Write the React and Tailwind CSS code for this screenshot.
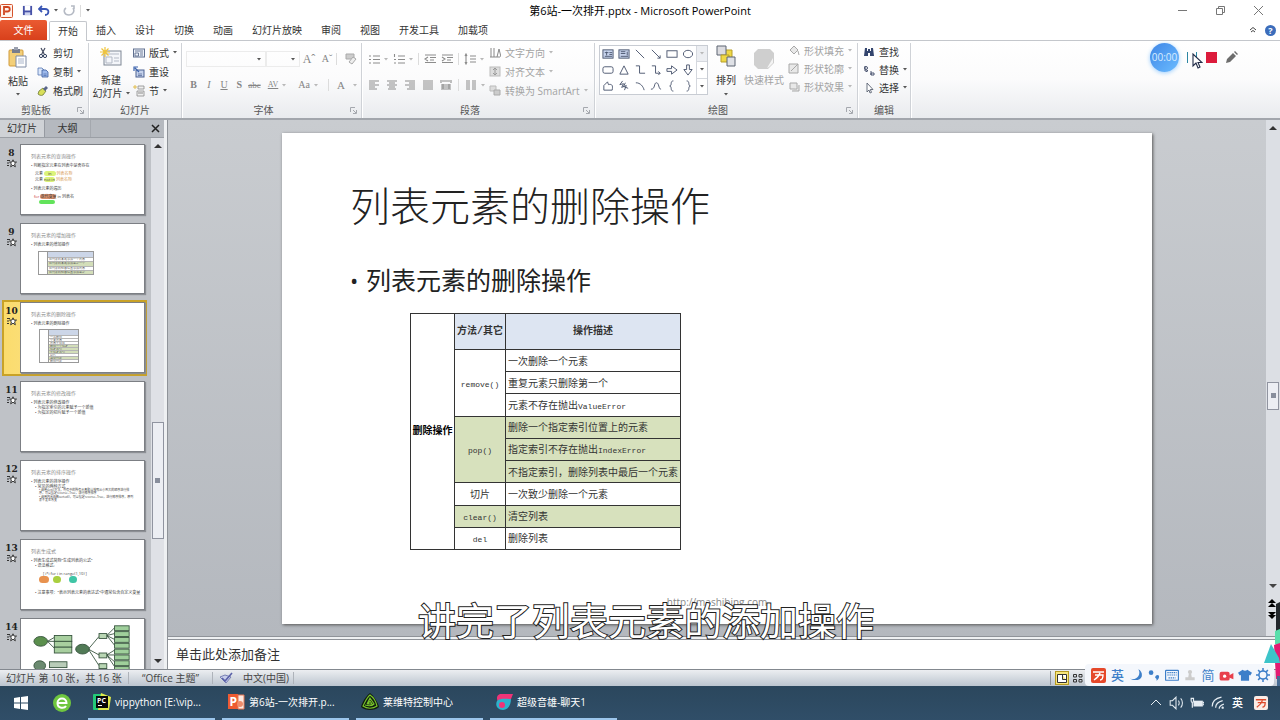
import React from "react";

const ribbonTabs = ["插入", "设计", "切换", "动画", "幻灯片放映", "审阅", "视图", "开发工具", "加载项"];

function Caret({ dim }) {
  return (
    <svg viewBox="0 0 4 3" className={dim ? "h-[3px] w-1 shrink-0 fill-[#b8b8b8]" : "h-[3px] w-1 shrink-0 fill-[#555]"}>
      <path d="M0 0h4L2 2.6z" />
    </svg>
  );
}

function Icon({ children, className = "h-3 w-3" }) {
  return (
    <svg viewBox="0 0 12 12" fill="none" aria-hidden="true" className={className + " shrink-0"}>
      {children}
    </svg>
  );
}

const ScissorsIcon = () => (
  <Icon><path d="M4 1l3.2 6M8 1L4.8 7" stroke="#444b60" strokeWidth="1.2" /><circle cx="4" cy="9" r="1.6" stroke="#33415f" /><circle cx="8" cy="9" r="1.6" stroke="#33415f" /></Icon>
);
const CopyIcon = () => (
  <Icon><path d="M1 2h4l2 2v5H1z" fill="#dbe7fb" stroke="#5878b4" strokeWidth=".8" /><path d="M5 4h4l2 2v5H5z" fill="#9db9ec" stroke="#3c5da0" strokeWidth=".8" /><path d="M6.500 8h3M6.500 9.500h3" stroke="#3c5da0" strokeWidth=".6" /></Icon>
);
const BrushIcon = () => (
  <Icon><path d="M2 6l4-3 3 3-3 4c-2 1-4 0-5-1z" fill="#d9df5a" stroke="#6d7a35" strokeWidth=".8" /><path d="M6 4l3-3 2 2-3 3z" fill="#59658a" /></Icon>
);
const LayoutIcon = () => (
  <Icon><rect x=".5" y="2" width="11" height="8" fill="#eef2fa" stroke="#60708f" /><path d="M2 4h8M2 6h3.500v3H2zM7 6h3M7 8h3" stroke="#60708f" strokeWidth=".9" /></Icon>
);
const ResetIcon = () => (
  <Icon><rect x="3" y="4" width="8" height="7" fill="#c5d2ec" stroke="#4c6292" /><path d="M1 5V1h4M2 2l4 4" stroke="#3a62ad" strokeWidth="1.2" /><path d="M5 8h4M5 9.500h4" stroke="#4c6292" strokeWidth=".7" /></Icon>
);
const SectionIcon = () => (
  <Icon><path d="M0 2h4M2 0v4" stroke="#e2bd4c" strokeWidth="1" /><path d="M5 1h6v3H5zM4 6h7v5H4z" fill="#efefef" stroke="#8b8b8b" strokeWidth=".8" /><path d="M5 8h5" stroke="#8b8b8b" /></Icon>
);

function Group({ label, width, launcher, children }) {
  return (
    <section className={width + " flex shrink-0 flex-col border-r border-[#cfd2d7] shadow-[1px_0_0_#fff]"} aria-label={label}>
      <div className="h-[61px]">{children}</div>
      <div className={(launcher ? "pr-4 " : "") + "relative h-4 text-center text-[10px] leading-4 text-[#555]"}>
        {label}
        {launcher && (
          <button aria-label={label + "选项"} className="absolute top-[5px] right-1">
            <svg viewBox="0 0 7 7" className="h-[7px] w-[7px]" fill="none" stroke="#a5a8ae"><path d="M.5 5V.5H5M3 3l3 3M6.500 3v3.500H3" /></svg>
          </button>
        )}
      </div>
    </section>
  );
}

function SmallCmd({ icon, label, caret, dim }) {
  return (
    <button className={(dim ? "text-[#a3a3a3] " : "text-[#333] ") + "flex h-[19px] items-center gap-1 whitespace-nowrap leading-none"}>
      {icon}
      <span>{label}</span>
      {caret && <Caret dim={dim} />}
    </button>
  );
}

const glyph = "flex h-4 w-[18px] items-center justify-center font-['Liberation_Serif'] leading-none text-[#858585]";
const Sep = () => <span className="h-3 w-px bg-[#dcdcdc]" />;

function LinesIcon({ kind, caret }) {
  const paths = {
    bullets: "M1 3h2M1 6.500h2M1 10h2M5 3h7M5 6.500h7M5 10h7",
    numbers: "M1.500 1v3M1 6.500h2M1 10h2M5 3h7M5 6.500h7M5 10h7",
    outdent: "M1 2h11M6 4.500h6M6 7h4M1 9.500h11M4 4L1 6l3 2",
    indent: "M1 2h11M6 4.500h6M6 7h4M1 9.500h11M1 4l3 2-3 2",
    spacing: "M2 2v8M1 3l1-2 1 2M1 9l1 2 1-2M6 3h6M6 6h6M6 9h6",
    left: "M1 2h10M1 4h6M1 6h10M1 8h6M1 10h8",
    center: "M1 2h10M3 4h6M1 6h10M3 8h6M2 10h8",
    right: "M1 2h10M5 4h6M1 6h10M5 8h6M3 10h8",
    justify: "M1 2h10M1 4h10M1 6h10M1 8h10M1 10h10",
    spread: "M1 1v3M11 1v3M2 2h8M1 6h10M1 8h10M1 10h10M3 5v5M9 5v5",
    columns: "M1 2h4M1 4h4M1 6h4M1 8h4M1 10h4M7 2h4M7 4h4M7 6h4M7 8h4M7 10h4",
  };
  return (
    <button aria-label={kind} className="flex h-4 items-center gap-1">
      <svg viewBox="0 0 12 12" className="h-3 w-3" stroke="#8c8c8c" strokeWidth="1.100" fill="none"><path d={paths[kind]} /></svg>
      {caret && <Caret dim />}
    </button>
  );
}

const shapeList = [
  <g key="a"><rect x="1" y="2" width="11" height="9" fill="#c9d5ee" /><path d="M3 5h4M5 4v4M8 5h3M8 7h3M3 9h8" /></g>,
  <g key="b"><rect x="1" y="2" width="11" height="9" fill="#c9d5ee" /><path d="M3 4h5M3 6h5M10 4v4M3 9h8" /></g>,
  <path key="c" d="M2 2l9 9" />,
  <path key="d" d="M2 2l9 9M11 8v3H8" />,
  <rect key="e" x="1" y="3" width="11" height="7" />,
  <ellipse key="f" cx="6.500" cy="6.500" rx="5" ry="4" />,
  <rect key="g" x="1" y="3" width="11" height="7" rx="2" />,
  <path key="h" d="M6.500 2L11 11H2z" />,
  <path key="i" d="M2 2h4v8h6" />,
  <path key="j" d="M2 2h4v8h5M9 8l2 2-2 2" />,
  <path key="k" d="M1 5h5V2l6 4.500L6 11V8H1z" />,
  <path key="l" d="M5 1h3v5h3l-4.500 6L2 6h3z" />,
  <path key="m" d="M2 11V6l4-4 1 3c4-1 5 1 4 6z" />,
  <path key="n" d="M5 1L2 5l4-1-2 4 5-2-2 5M8 3l-2 4 5 2" />,
  <path key="o" d="M2 3c5 0 8 4 9 8" />,
  <path key="p" d="M1 10c5 0 3-7 6-7s2 7 5 7" />,
  <path key="q" d="M8 1C4 1 7 6 4 6.500 7 7 4 12 8 12" />,
  <path key="r" d="M5 1c4 0 1 5 4 5.500C6 7 9 12 5 12" />,
];

function Ribbon() {
  return (
    <div className="relative flex h-[79px] shrink-0 overflow-hidden border-b-2 border-[#a2a6ac] bg-linear-to-b from-white via-[#fbfbfc] to-[#e9ebee] pt-[2px] text-[10px]">
      <Group label="剪贴板" width="w-[89px]" launcher>
        <div className="flex gap-[7px] pl-[6px]">
          <button className="flex w-6 flex-col items-center pt-1 whitespace-nowrap text-[#333]">
            <svg viewBox="0 0 20 22" className="h-[22px] w-5">
              <rect x="1" y="3" width="14" height="16" rx="1" fill="#f3cf79" stroke="#d19b3c" />
              <path d="M4 2h8v4H4z" fill="#777d8d" /><rect x="6" y="0" width="4" height="3" fill="#9aa0ae" />
              <path d="M8 9h10v11H8z" fill="#fff" stroke="#7f8ba5" /><path d="M10 12h6M10 14h6M10 16h6" stroke="#aab5ca" />
            </svg>
            <span className="mt-1 mb-1 leading-4">粘贴</span>
            <Caret />
          </button>
          <div className="flex flex-col">
            <SmallCmd icon={<ScissorsIcon />} label="剪切" />
            <SmallCmd icon={<CopyIcon />} label="复制" caret />
            <SmallCmd icon={<BrushIcon />} label="格式刷" />
          </div>
        </div>
      </Group>
      <Group label="幻灯片" width="w-[93px]">
        <div className="flex gap-1 pl-1">
          <button className="flex w-9 flex-col items-center pt-1 whitespace-nowrap text-[#333]">
            <svg viewBox="0 0 22 22" className="h-[22px] w-[22px]">
              <rect x="4" y="4" width="17" height="14" fill="#f4f6fa" stroke="#7f8795" /><path d="M6 7h13M6 10h6v6H6zM14 11h5M14 14h5" stroke="#b3b9c5" fill="none" />
              <path d="M5 0v10M0 5h10M1.500 1.500l7 7M8.500 1.500l-7 7" stroke="#f0c43a" strokeWidth="1.200" />
            </svg>
            <span className="mt-1 leading-[14px]">新建</span>
            <span className="flex items-center gap-[3px] leading-[12px]">幻灯片<Caret /></span>
          </button>
          <div className="flex flex-col">
            <SmallCmd icon={<LayoutIcon />} label="版式" caret />
            <SmallCmd icon={<ResetIcon />} label="重设" />
            <SmallCmd icon={<SectionIcon />} label="节" caret />
          </div>
        </div>
      </Group>
      <Group label="字体" width="w-[180px]" launcher>
        <div className="flex flex-col gap-[10px] px-1 pt-2">
          <div className="flex items-center">
            <button aria-label="字体" className="flex h-4 w-20 items-center justify-end border border-[#ececec] px-1"><Caret /></button>
            <button aria-label="字号" className="flex h-4 w-[34px] items-center justify-end border border-[#ececec] px-1"><Caret /></button>
            <span className={glyph + " text-[12px]"}>Aˆ</span>
            <span className={glyph + " text-[10px]"}>Aˇ</span>
            <Sep />
            <span className="pl-2"><Icon className="h-3 w-3"><path d="M1 1h8v5H1z" fill="#ccc" stroke="#aaa" /><path d="M4 9l4-5 3 2-4 5z" fill="#eee" stroke="#aaa" /></Icon></span>
          </div>
          <div className="flex items-center">
            <span className={glyph + " text-[10px] font-bold"}>B</span>
            <span className={glyph + " text-[10px] italic"}>I</span>
            <span className={glyph + " text-[10px] underline"}>U</span>
            <span className={glyph + " text-[10px] font-bold"}>S</span>
            <span className={glyph + " text-[9px] line-through"}>abc</span>
            <span className={glyph + " gap-1 pl-3 text-[8px] underline"}>AV<Caret dim /></span>
            <span className={glyph + " gap-1 pl-7 text-[10px]"}>Aa<Caret dim /></span>
            <span className="flex items-center gap-2 pl-5"><Sep /><span className="flex items-center gap-2 font-['Liberation_Serif'] text-[11px] leading-none text-[#858585]">A<Caret dim /></span></span>
          </div>
        </div>
      </Group>
      <Group label="段落" width="w-[233px]" launcher>
        <div className="flex">
          <div className="flex w-[127px] flex-col gap-[10px] pt-2 pl-[6px]">
            <div className="flex items-center gap-[5px]">
              <LinesIcon kind="bullets" caret /><LinesIcon kind="numbers" caret /><Sep />
              <LinesIcon kind="outdent" /><LinesIcon kind="indent" /><Sep /><LinesIcon kind="spacing" caret />
            </div>
            <div className="flex items-center gap-[6px]">
              <LinesIcon kind="left" /><LinesIcon kind="center" /><LinesIcon kind="right" /><LinesIcon kind="justify" /><LinesIcon kind="spread" /><Sep /><LinesIcon kind="columns" caret />
            </div>
          </div>
          <div className="flex flex-col">
            <SmallCmd dim caret label="文字方向" icon={<Icon><path d="M2 1v9M5 1v9M8 10l2-8 2 8M1 10h10" stroke="#888" /></Icon>} />
            <SmallCmd dim caret label="对齐文本" icon={<Icon><rect x="1" y="1" width="10" height="9" fill="#ddd" stroke="#bbb" /><path d="M6 2v7M4 4l2-2 2 2M4 7l2 2 2-2" stroke="#999" /></Icon>} />
            <SmallCmd dim caret label="转换为 SmartArt" icon={<Icon><path d="M1 1h6v5H1z" fill="#ddd" stroke="#bbb" /><path d="M5 5h6v5H5z" fill="#ccc" stroke="#aaa" /></Icon>} />
          </div>
        </div>
      </Group>
      <Group label="绘图" width="w-[263px]" launcher>
        <div className="flex gap-1 pt-[2px] pl-1">
          <div className="flex h-[50px] w-[109px] border border-[#c8ccd3] bg-white">
            <div className="grid flex-1 grid-cols-6 grid-rows-3 place-items-center">
              {shapeList.map((s, i) => (
                <svg key={i} viewBox="0 0 13 13" className="h-3 w-3" fill="none" stroke="#4a556e">{s}</svg>
              ))}
            </div>
            <div className="flex w-[11px] flex-col border-l border-[#d5d8de]">
              <button aria-label="上一行" className="flex flex-1 items-center justify-center bg-[#eceef2]"><Caret dim /></button>
              <button aria-label="下一行" className="flex flex-1 items-center justify-center border-y border-[#d5d8de]"><Caret /></button>
              <button aria-label="其他形状" className="flex flex-1 items-center justify-center"><Caret /></button>
            </div>
          </div>
          <button className="flex w-7 flex-col items-center whitespace-nowrap text-[#333]">
            <svg viewBox="0 0 20 22" className="h-[22px] w-5">
              <path d="M7 5h9v9H7z" fill="#efd847" stroke="#b79f29" /><path d="M1 1h9v9H1z" fill="#dcdce0" stroke="#5d6473" /><path d="M5 10h8v7H5z" fill="#efd847" stroke="#b79f29" /><path d="M11 12h8v9h-8z" fill="#dfe1e6" stroke="#5d6473" />
            </svg>
            <span className="mt-[5px] mb-[5px] leading-4">排列</span>
            <Caret />
          </button>
          <button className="flex w-10 flex-col items-center pt-1 whitespace-nowrap text-[#a3a3a3]">
            <svg viewBox="0 0 20 20" className="h-5 w-5"><path d="M4 0h12l4 4v10l-6 6H4l-4-4V4z" fill="#cfcfcf" /><path d="M19 9l-6 10 2-1 4-4z" fill="#f3f3f3" /></svg>
            <span className="mt-[3px] leading-4">快速样式</span>
          </button>
          <div className="-mt-1 flex flex-col">
            {[["形状填充", "M2 5l4-4 4 4-4 4zM10 6l1 4"], ["形状轮廓", "M1 1h9v9H1zM3 8l7-7"], ["形状效果", "M2 2h7v6H2zM4 10h7V4"]].map(([t, d]) => (
              <div key={t} className="h-[18px]"><SmallCmd dim caret label={t} icon={<Icon><path d={d} stroke="#a8a8a8" fill="#e8e8e8" /></Icon>} /></div>
            ))}
          </div>
        </div>
      </Group>
      <Group label="编辑" width="w-[53px]">
        <div className="-mt-px flex flex-col pl-[5px]">
          <div className="h-[18px]"><SmallCmd label="查找" icon={<Icon><path d="M2 2h2v3h1V3h2v2h1V2h2l1 8H7V7H5v3H1z" fill="#34456e" /></Icon>} /></div>
          <div className="h-[18px]"><SmallCmd caret label="替换" icon={<Icon><path d="M2 2v5h3M3 8l2-2M8 7v4M8 9h3v2H8z" stroke="#4a5470" /><circle cx="3" cy="4" r="1.500" stroke="#4a5470" /></Icon>} /></div>
          <div className="h-[18px]"><SmallCmd caret label="选择" icon={<Icon><path d="M4 1v9l2-2 1 3 1.500-.6L7.300 7.500H10z" fill="#fff" stroke="#5a6272" strokeWidth=".9" /></Icon>} /></div>
        </div>
      </Group>

      <div className="absolute top-[2px] right-[42px] flex items-center">
        <div className="flex h-[29px] w-[29px] items-center justify-center rounded-full bg-linear-to-br from-[#3f86e6] to-[#6cbcff] text-[10px] text-[#d9ecff] shadow-[0_1px_4px_#9ed0ff]">00:00</div>
        <button aria-label="暂停" className="relative mr-[9px] ml-2 flex h-4 w-[10px] items-center justify-between">
          <span className="h-[11px] w-px bg-[#2b86a3]" /><span className="h-[11px] w-px bg-[#2b86a3]" />
          <svg viewBox="0 0 11 16" className="absolute top-[3px] left-[5px] h-4 w-[11px]"><path d="M1 1v12l3-3 2 5 2-1-2-4.500h4z" fill="#fff" stroke="#222c48" strokeWidth="1.100" /></svg>
        </button>
        <button aria-label="停止" className="h-[11px] w-[11px] bg-[#dc1b3c]" />
        <button aria-label="画笔" className="ml-2">
          <svg viewBox="0 0 13 13" className="h-[13px] w-[13px]"><path d="M1 12l1-4 6-6 3 3-6 6zM9 1l1-1 3 3-1 1z" fill="#6d6d6d" /></svg>
        </button>
      </div>
    </div>
  );
}

const thumbTitle = "text-[5px] leading-[8px] text-[#8a8a8a]";
const thumbText = "text-[4px] leading-[5px] text-[#444] whitespace-nowrap";

function MiniTable({ rows, green, className }) {
  return (
    <div className={className + " flex border border-[#999] text-[3px] leading-none text-[#555]"}>
      <div className="flex w-[9px] items-center justify-center border-r border-[#999] bg-white" />
      <div className="flex flex-1 flex-col">
        <div className="h-[5px] bg-[#ccd6e8]" />
        {rows.map((r, i) => (
          <div key={i} className={(green.includes(i) ? "bg-[#d3deb9] " : "bg-white ") + "flex flex-1 items-center overflow-hidden border-t border-[#b5b5b5] pl-px whitespace-nowrap"}>{r}</div>
        ))}
      </div>
    </div>
  );
}

const thumbs = [
  { n: 8, title: "列表元素的查询操作", body: (
    <>
      <p className={thumbText}>• 判断指定元素在列表中是否存在</p>
      <p className={thumbText + " mt-[3px] pl-1"}>元素 <span className="rounded-full bg-[#dcf37b] px-1">in</span> <span className="text-[#d79a52]">列表名称</span></p>
      <p className={thumbText + " mt-px pl-1"}>元素 <span className="rounded-full bg-[#dcf37b]">not in</span> <span className="text-[#d79a52]">列表名称</span></p>
      <p className={thumbText + " mt-1"}>• 列表元素的遍历</p>
      <p className={thumbText + " mt-[3px] pl-[3px]"}><span className="text-[#c33]">for</span> <span className="rounded-full bg-[#d9906b]">迭代变量</span> in 列表名</p>
      <div className="mt-px ml-2 h-1 w-4 rounded-full bg-[#62e35b]" />
    </>
  ) },
  { n: 9, title: "列表元素的增加操作", body: (
    <><p className={thumbText}>• 列表元素的增加操作</p>
      <MiniTable className="mt-1 ml-[7px] h-6 w-14" green={[1, 3]} rows={["在列表的末尾添加一个元素", "在列表的末尾添加至少一个", "在列表的任意位置添加元素", "在列表的任意位置添加至少"]} /></>
  ) },
  { n: 10, title: "列表元素的删除操作", body: (
    <><p className={thumbText}>• 列表元素的删除操作</p>
      <MiniTable className="mt-[3px] ml-2 h-[34px] w-[40px]" green={[3, 4, 5, 7]} rows={["一次删除", "重复元素", "元素不存在", "删除一个指定", "指定索引", "不指定索引", "切片", "清空列表", "删除列表"]} /></>
  ) },
  { n: 11, title: "列表元素的修改操作", body: (
    <><p className={thumbText}>• 列表元素的修改操作</p><p className={thumbText + " pl-1"}>• 为指定索引的元素赋予一个新值</p><p className={thumbText + " pl-1"}>• 为指定的切片赋予一个新值</p></>
  ) },
  { n: 12, title: "列表元素的排序操作", body: (
    <><p className={thumbText}>• 列表元素的排序操作</p><p className={thumbText + " pl-1"}>• 常见的两种方式</p>
      <p className="pl-2 text-[3px] leading-[3px] text-[#444]">• 调用sort()方法，列有中的所有元素默认按照从小到大的顺序进行排序，可以指定reverse=True，进行降序排序</p>
      <p className="mt-px pl-2 text-[3px] leading-[3px] text-[#444]">• 调用内置函数sorted()，可以指定reverse=True，进行降序排序，原列表不发生改变</p></>
  ) },
  { n: 13, title: "列表生成式", body: (
    <><p className={thumbText}>• 列表生成式简称“生成列表的公式”</p><p className={thumbText + " pl-1"}>• 语法格式:</p>
      <p className={thumbText + " mt-[3px] pl-3"}>[ i*i for i in range(1,10) ]</p>
      <div className="flex gap-1 pl-2"><span className="h-[7px] w-[10px] rounded-full bg-[#e8924f]" /><span className="h-[7px] w-2 rounded-full bg-[#a9cf3f]" /><span className="ml-1 h-[7px] w-2 rounded-full bg-[#3fc5a5]" /></div>
      <p className={thumbText + " mt-[7px] pl-1"}>• 注意事项：“表示列表元素的表达式”中通常包含自定义变量</p></>
  ) },
];

function TreeThumb() {
  const leaves = [7, 13, 19, 25, 31, 37, 43, 49];
  return (
    <svg viewBox="0 0 124 71" className="h-full w-full" stroke="#35523c" strokeWidth=".9" fill="none">
      <path d="M26 23l7-4M26 23h7M26 23l7 7M68 31l11-13M68 31l11 6M68 31l11 17M87 17l8-8M87 17l8-2M87 17l8 4M87 17l8 10M87 37l8-5M87 37h8M87 37l8 7M87 37l8 12" />
      <ellipse cx="19" cy="23" rx="7" ry="5" fill="#5b8f4d" /><ellipse cx="62" cy="31" rx="7" ry="5" fill="#517a56" /><ellipse cx="18" cy="48" rx="6" ry="5" fill="#6b8a70" />
      {[18, 24, 30].map((y) => <rect key={y} x="33" y={y - 1} width="18" height="6" fill="#a8cf9f" />)}
      <rect x="28" y="44" width="18" height="6" fill="#b9ccb8" />
      {[15, 35, 46].map((y) => <rect key={y} x="79" y={y} width="8" height="5" fill="#b9d6b4" />)}
      {leaves.map((y) => <rect key={y} x="95" y={y} width="15" height="5" fill="#9fcf9b" />)}
    </svg>
  );
}

function Thumb({ n, active, children }) {
  return (
    <li className={(active ? "border-[#c9a227] bg-linear-to-r from-[#fbdc6d] to-[#f9e9a8] " : "border-transparent ") + "mr-1 mb-[3px] ml-[2px] flex shrink-0 border-2 pb-px"}>
      <div className="flex w-[15px] shrink-0 flex-col items-center pt-[3px] font-['DejaVu_Serif',serif] text-[9px] leading-[12px] font-bold text-[#222]">
        <span>{n}</span>
        <svg viewBox="0 0 10 9" className="h-[9px] w-[10px]" fill="#fff" stroke="#222" strokeWidth=".9"><path d="M0 1.500h3M0 4h2M0 6.500h2" /><path d="M6 .8l1 2.300h2.500L7.600 4.800l.7 3L6 6.200 3.700 7.800l.7-3-1.900-1.700H5z" /></svg>
      </div>
      <div className="ml-px h-[71px] w-[125px] shrink-0 overflow-hidden border border-[#7c7f84] bg-white shadow-[1px_1px_1px_#8c8f94]">{children}</div>
    </li>
  );
}

function SidePanel() {
  return (
    <aside className="flex w-[164px] shrink-0 flex-col bg-[#bfc2c7]">
      <div className="flex h-[18px] shrink-0 items-stretch border-b border-[#9b9fa5] bg-[#b5b9bf] text-[10px] text-[#333]">
        <button className="w-[45px] border-r border-[#969aa1] bg-[#cfd2d6]">幻灯片</button>
        <button className="w-[46px] border-r border-[#a4a8ae]">大纲</button>
        <button aria-label="关闭" className="ml-auto pr-1"><svg viewBox="0 0 9 9" className="h-[9px] w-[9px]" stroke="#222" strokeWidth="1.500"><path d="M1 1l7 7M8 1L1 8" /></svg></button>
      </div>
      <div className="flex min-h-0 flex-1">
        <ol className="flex min-w-0 flex-1 flex-col overflow-hidden pt-1">
          {thumbs.map((t) => (
            <Thumb key={t.n} n={t.n} active={t.n === 10}>
              <div className="px-[10px] pt-[7px]"><h3 className={thumbTitle}>{t.title}</h3><div className="pt-[3px]">{t.body}</div></div>
            </Thumb>
          ))}
          <Thumb n={14}><TreeThumb /></Thumb>
        </ol>
        <div className="flex w-[13px] flex-col items-center bg-[#dfe1e6]">
          <button aria-label="向上滚动" className="flex h-4 items-center"><svg viewBox="0 0 8 4" className="h-1 w-2 fill-[#333]"><path d="M0 4h8L4 0z" /></svg></button>
          <div className="flex-[269]" />
          <div className="flex w-3 flex-[115] items-center justify-center border border-[#9094a0] bg-[#eceef3]"><span className="h-[5px] w-[5px] bg-[#888e9c]" /></div>
          <div className="flex-[114]" />
          <button aria-label="向下滚动" className="flex h-4 items-center"><svg viewBox="0 0 8 4" className="h-1 w-2 fill-[#333]"><path d="M0 0h8L4 4z" /></svg></button>
        </div>
      </div>
    </aside>
  );
}

const cell = "border border-[#333] px-[2px] pt-1 pb-0 whitespace-nowrap leading-none";
const M = ({ children }) => <span className="font-['Liberation_Mono',monospace] text-[8px]">{children}</span>;

function MethodTable() {
  return (
    <table className="h-[237px] w-[270px] table-fixed border-collapse font-['Liberation_Mono','Noto_Sans_CJK_SC',monospace] text-[10px] text-[#333]">
      <colgroup><col className="w-[44px]" /><col className="w-[51px]" /><col className="w-[175px]" /></colgroup>
      <tbody>
        <tr className="h-9"><th rowSpan={10} className="border border-[#333] p-0 whitespace-nowrap text-black">删除操作</th><th className="border border-[#333] bg-[#dde5f2] p-0 whitespace-nowrap">方法/其它</th><th className="border border-[#333] bg-[#dde5f2] p-0">操作描述</th></tr>
        <tr><td rowSpan={3} className={cell + " text-center"}><M>remove()</M></td><td className={cell}>一次删除一个元素</td></tr>
        <tr><td className={cell}>重复元素只删除第一个</td></tr>
        <tr><td className={cell}>元素不存在抛出<M>ValueError</M></td></tr>
        <tr className="bg-[#d7e1bd]"><td rowSpan={3} className={cell + " text-center"}><M>pop()</M></td><td className={cell}>删除一个指定索引位置上的元素</td></tr>
        <tr className="bg-[#d7e1bd]"><td className={cell}>指定索引不存在抛出<M>IndexError</M></td></tr>
        <tr className="bg-[#d7e1bd]"><td className={cell}>不指定索引，删除列表中最后一个元素</td></tr>
        <tr><td className={cell + " text-center"}>切片</td><td className={cell}>一次致少删除一个元素</td></tr>
        <tr className="bg-[#d7e1bd]"><td className={cell + " text-center"}><M>clear()</M></td><td className={cell}>清空列表</td></tr>
        <tr><td className={cell + " text-center"}><M>del</M></td><td className={cell}>删除列表</td></tr>
      </tbody>
    </table>
  );
}

function Editor() {
  return (
    <main className="flex min-w-0 flex-1 flex-col border-l border-[#8f9399]">
      <div className="flex min-h-0 flex-1 border-b border-[#8f9399]">
        <div className="flex min-w-0 flex-1 justify-center bg-linear-to-b from-[#c9ccd0] to-[#b4b8be] pt-[13px] pb-3">
          <article className="flex aspect-[870/491] h-full flex-col bg-white px-[68px] pt-[46px] text-[#222] shadow-[1px_1px_3px_#555]">
            <h1 className="text-[40px] leading-[54px] font-light">列表元素的删除操作</h1>
            <p className="mt-[29px] flex items-center text-[25px] leading-9"><span className="w-4 text-[22px]">•</span>列表元素的删除操作</p>
            <div className="mt-[15px] pl-[60px]"><MethodTable /></div>
            <p className="mt-auto pb-[14px] text-center text-[10px] leading-4 text-[#888]">http://mashibing.com</p>
          </article>
        </div>
        <div className="flex w-[14px] flex-col items-center bg-[#dcdfe4]">
          <button aria-label="上一屏" className="flex h-4 items-center"><svg viewBox="0 0 8 4" className="h-1 w-2 fill-[#333]"><path d="M0 4h8L4 0z" /></svg></button>
          <div className="flex-[248]" />
          <div className="flex w-3 flex-[26] items-center justify-center border border-[#9094a0] bg-[#eceef3]"><span className="h-[5px] w-[5px] bg-[#888e9c]" /></div>
          <div className="flex-[170]" />
          <button aria-label="下一屏" className="flex h-4 items-center"><svg viewBox="0 0 8 4" className="h-1 w-2 fill-[#444]"><path d="M0 0h8L4 4z" /></svg></button>
          <svg viewBox="0 0 10 22" className="mt-1 mr-[2px] mb-4 h-[22px] w-[10px]" fill="#000"><path d="M1 5l4-4 4 4zM1 9l4-4 4 4zM1 14h8l-4 4zM1 17h8l-4 4z" /></svg>
        </div>
      </div>
      <div className="mt-[2px] flex h-[30px] items-center border-t border-[#8f9399] bg-white pl-2 text-[13px] leading-none text-[#333]">单击此处添加备注</div>
    </main>
  );
}

const imeBlue = "#3d7fc9";

function StatusBar() {
  return (
    <footer className="relative flex h-[17px] shrink-0 items-center border-t border-[#83888f] bg-linear-to-b from-[#eceef1] to-[#bcc5cf] text-[10px] text-[#444]">
      <span className="w-[129px] border-r border-[#aeb3ba] pl-[6px] leading-3 whitespace-nowrap">幻灯片 第 10 张，共 16 张</span>
      <span className="w-[84px] border-r border-[#aeb3ba] text-center leading-3">“Office 主题”</span>
      <button aria-label="拼写检查" className="px-[6px]"><svg viewBox="0 0 14 12" className="h-3 w-[14px]"><path d="M1 5l5-2 6 2-5 6z" fill="#c6cdea" stroke="#7880b4" /><path d="M3 6l3 3 7-8" stroke="#5960a8" strokeWidth="1.600" fill="none" /></svg></button>
      <span className="border-r border-[#aeb3ba] px-1 leading-3">中文(中国)</span>
      <div className="ml-auto flex items-center gap-1 border-l border-[#8d9299] pr-[197px] pl-1">
        <button aria-label="普通视图" className="flex h-[14px] w-[14px] items-center justify-center border border-[#b59a22] bg-[#f8e67c]"><svg viewBox="0 0 10 9" className="h-[9px] w-[10px]" fill="#fff" stroke="#333"><path d="M.5.500h9v8h-9zM5.500 1v4.500H9" /></svg></button>
        <button aria-label="幻灯片浏览"><svg viewBox="0 0 10 9" className="h-[9px] w-[10px]" fill="none" stroke="#333"><path d="M.5.500h3v2.500h-3zM6 .5h3v2.500H6zM.5 5.500h3V8h-3zM6 5.500h3V8H6z" /></svg></button>
      </div>
      <svg viewBox="0 0 18 86" className="pointer-events-none absolute right-0 bottom-0 h-[86px] w-[18px]">
        <path d="M14 4l4-2v29h-4z" fill="#22272b" /><path d="M13 31l5-2v14l-2 4-3-3z" fill="#58dfab" /><path d="M12 45l6-2v36h-4z" fill="#e31b72" />
        <path d="M9 44l8 14 1 5H2z" fill="#3cc4c9" /><path d="M15 76h3v10h-3z" fill="#476c94" />
      </svg>
      <div className="absolute right-[6px] bottom-0 flex h-[22px] items-center gap-1 rounded bg-[#f4f7fc] pr-1 pl-[6px]">
        <Wan className="h-[15px] w-[15px] bg-[#e5482a] text-white" />
        <span className="w-[15px] text-center text-[13px] leading-none font-medium text-[#3d7fc9]">英</span>
        <Icon className="h-[14px] w-[14px]"><path d="M8 1c3 5-2 10-7 8 3 2 9 2 10-2 .5-3-1-5-3-6z" fill={imeBlue} /></Icon>
        <Icon className="h-[14px] w-[14px]"><circle cx="3.500" cy="4" r="2" fill={imeBlue} /><path d="M9 6c2 0 2 3-1 5 1-2-1-2-1-3s1-2 2-2z" fill={imeBlue} /></Icon>
        <Icon className="h-[14px] w-[14px]"><rect x=".5" y="2" width="11" height="8.500" rx=".5" stroke={imeBlue} /><path d="M2 4h8M2 6h8M3 8.500h6" stroke={imeBlue} strokeDasharray="1.200 .6" /></Icon>
        <Icon className="h-[14px] w-[14px]"><circle cx="6" cy="3.500" r="1.800" fill="#ccc" /><path d="M5 5h2l.5 3H10v2.500H2V8h2.500z" fill="#ccc" /></Icon>
        <span className="w-[14px] text-center text-[13px] leading-none text-[#3d7fc9]">简</span>
        <Icon className="h-[15px] w-[15px]"><rect x=".5" y="3" width="8" height="7" rx="1.500" fill="#e8404c" /><path d="M8 6l3.500-2v5L8 7.500z" fill="#e8404c" /><circle cx="4.500" cy="6.500" r="1.300" fill="#fff" /></Icon>
        <Icon className="h-[14px] w-[14px]"><path d="M4 1.500c1 1 3 1 4 0L12 4l-1.500 2.500L9.500 6v5h-7V6l-1 .5L0 4z" fill={imeBlue} /></Icon>
        <Icon className="h-[14px] w-[14px]"><circle cx="6" cy="6" r="3.500" stroke={imeBlue} strokeWidth="1.300" /><path d="M6 0v2.500M6 9.500V12M0 6h2.500M9.500 6H12M1.800 1.800l1.700 1.700M8.500 8.500l1.700 1.700M10.200 1.800L8.500 3.500M3.500 8.500l-1.700 1.700" stroke={imeBlue} strokeWidth="1.300" /></Icon>
      </div>
    </footer>
  );
}

function Wan({ className }) {
  return (
    <svg viewBox="0 0 15 15" className={className + " shrink-0 rounded-xs"} fill="none" stroke="currentColor" strokeWidth="1.400"><path d="M2 4h11M4 7h8c0 3-1 5-3 5M9 5c-1 3-3 5-6 7" /></svg>
  );
}

const apps = [
  { name: "vippython [E:\\vip...", icon: <><rect x="0" y="1" width="10" height="16" rx="1" fill="#24c978" /><path d="M8 0l10 4-2 13H5z" fill="#dfe94b" /><rect x="3" y="3" width="12" height="12" fill="#080808" /><path d="M5 12.500h4" stroke="#fff" /><text x="4" y="9.500" fontSize="7" fontWeight="700" fill="#fff" fontFamily="Open Sans">PC</text></> },
  { name: "第6站-一次排开.p...", icon: <><path d="M1 1h10v15H1z" fill="#ee5b32" /><path d="M11 2h6v14h-6z" fill="#fbe9e2" stroke="#e77752" /><circle cx="13" cy="11" r="3" fill="#ef8c6c" /><text x="2.500" y="13" fontSize="12" fontWeight="700" fill="#fff" fontFamily="Open Sans">P</text></> },
  { name: "莱维特控制中心", icon: <><path d="M9 0c3 2 8 9 9 14-4 4-14 4-18 0C1 9 5 3 9 0z" fill="#101c10" /><path d="M9 2c3 2 6 7 7 11-4 3-10 3-14 0C4 9 6 4 9 2zM6 11l3-6 4 6c-2 2-6 2-9 1M9 8l2 3H7z" fill="none" stroke="#78c52b" strokeWidth="1.100" /></> },
  { name: "超级音雄-聊天1", icon: <><path d="M5 1h13l-2 5H9c-3 0-5 1-6 3C1 5 2 2 5 1z" fill="#ef3478" /><path d="M2 8c3-3 8-2 14-2 0 6-3 11-8 11-6 0-8-5-6-9z" fill="#2cb2cc" /><circle cx="7" cy="12" r="3" fill="#ef3478" /></> },
];

function Taskbar() {
  return (
    <nav className="flex h-[34px] shrink-0 bg-linear-to-b from-[#2b475d] to-[#304e68] text-[10px] text-white">
      <button aria-label="开始" className="flex w-[41px] items-center justify-center"><svg viewBox="0 0 14 14" className="h-[14px] w-[14px]" fill="#fff"><path d="M0 2l6-1v5.500H0zM7 1l7-1v6.500H7zM0 7.500h6V13l-6-1zM7 7.500h7V14l-7-1z" /></svg></button>
      <button aria-label="浏览器" className="flex w-[42px] items-center justify-center"><svg viewBox="0 0 18 18" className="h-[18px] w-[18px]"><circle cx="9" cy="9" r="9" fill="#6fc63f" /><path d="M4.500 9h9c0-6-9-6-9 0s7 5.500 8.500 3" fill="none" stroke="#fff" strokeWidth="2" /></svg></button>
      <div className="ml-[5px] flex gap-[7px]">
        {apps.map((a) => (
          <button key={a.name} className="flex w-[127px] items-center gap-1 border-b-2 border-[#9cc6ec] pl-[5px] whitespace-nowrap">
            <svg viewBox="0 0 18 18" className="h-[18px] w-[18px] shrink-0">{a.icon}</svg>
            <span>{a.name}</span>
          </button>
        ))}
      </div>
      <div className="ml-auto flex items-center gap-[7px] pr-3">
        <Icon><path d="M1 8l5-5 5 5" stroke="#e6edf3" /></Icon>
        <Icon className="h-[14px] w-[14px]"><path d="M1 4h2l3-3v10L3 8H1zM8 4c1 1 1 3 0 4M10 2c2 2 2 6 0 8" stroke="#e6edf3" strokeWidth=".9" /></Icon>
        <Icon className="h-[14px] w-[14px]"><path d="M3 4h8v5H3z" fill="#e6edf3" /><path d="M11 5.500h1v2h-1M1 2v2c0 2 2 2 2 0V2zM2 5v5" stroke="#e6edf3" /></Icon>
        <Icon className="h-[14px] w-[14px]"><path d="M1 9c0-4 3-7 8-8M4 10c0-3 2-5 6-6M7 11c0-2 1-3 4-4" stroke="#e6edf3" /><circle cx="10" cy="10" r="1" fill="#e6edf3" /></Icon>
        <span className="text-[11px] font-medium">英</span>
        <Wan className="ml-1 h-[14px] w-[14px] bg-[#fbece6] text-[#dd4a2c]" />
      </div>
    </nav>
  );
}

export default function App() {
  return (
    <div className="relative flex h-screen flex-col overflow-hidden bg-white font-['Open_Sans','Noto_Sans_CJK_SC',sans-serif] text-[#333]">
      <header className="shrink-0">
        <div className="grid h-[21px] grid-cols-[1fr_auto_1fr] items-center">
          <div className="flex items-center gap-[5px]">
            <svg viewBox="0 0 14 14" className="h-[14px] w-[14px]"><rect x=".5" y=".5" width="12" height="13" rx="1" fill="#fff3ed" stroke="#d5532c" /><path d="M4 11V3h3.500c3 0 3 4.500 0 4.500H5" stroke="#cf4520" strokeWidth="1.800" fill="none" /></svg>
            <button aria-label="保存" className="ml-[3px]"><Icon className="h-[11px] w-[11px]"><path d="M1 1h10v10H1z" fill="#4752a8" /><path d="M3 1h6v5H3z" fill="#fff" /><path d="M3 8h6v3H3z" fill="#cdd3ee" /></Icon></button>
            <button aria-label="撤消" className="flex items-center gap-1"><Icon><path d="M4 1L1 4l3 3M1 4h6c5 0 4 6 0 6" stroke="#3a56b4" strokeWidth="1.800" /></Icon><Caret /></button>
            <button aria-label="恢复"><Icon><path d="M8 1h3v3M10 3c2 3 0 7-4 7-5 0-6-5-3-7" stroke="#b5bac4" strokeWidth="1.600" /></Icon></button>
            <Sep />
            <Caret />
          </div>
          <h2 className="text-[11px] leading-none text-black">第6站-一次排开.pptx - Microsoft PowerPoint</h2>
          <div className="flex items-center justify-end gap-[29px] pr-[17px]">
            <button aria-label="最小化" className="h-px w-[9px] bg-[#777]" />
            <button aria-label="还原"><svg viewBox="0 0 9 9" className="h-[9px] w-[9px]" fill="none" stroke="#777"><path d="M.5 2.500h6v6h-6zM2.500 2V.500h6v6H7" /></svg></button>
            <button aria-label="关闭窗口"><svg viewBox="0 0 9 9" className="h-[9px] w-[9px]" stroke="#777"><path d="M0 0l9 9M9 0L0 9" /></svg></button>
          </div>
        </div>
        <div className="flex h-5 items-end border-b border-[#c4c7cc] text-[10px]">
          <button className="h-5 w-[47px] rounded-t-xs bg-linear-to-b from-[#ea5a31] to-[#d8401b] text-white">文件</button>
          <button className="mt-px -mb-px ml-[2px] h-5 w-[38px] rounded-t-xs border border-b-0 border-[#c4c7cc] bg-white">开始</button>
          <div className="flex h-5 gap-px">
            {ribbonTabs.map((t) => <button key={t} className="px-[9px]">{t}</button>)}
          </div>
          <div className="ml-auto flex h-5 items-center gap-2 pr-1">
            <button aria-label="折叠功能区"><svg viewBox="0 0 8 6" className="h-[6px] w-2" fill="none" stroke="#444"><path d="M1 3l3-2.500L7 3M2 5l2-1.500L6 5" /></svg></button>
            <button aria-label="帮助" className="flex h-[11px] w-[11px] items-center justify-center rounded-full bg-[#3c6dbb] text-[9px] leading-none font-bold text-white">?</button>
          </div>
        </div>
      </header>
      <Ribbon />
      <div className="flex min-h-0 flex-1 gap-[3px] bg-[#eef0f2]">
        <SidePanel />
        <Editor />
      </div>
      <StatusBar />
      <Taskbar />
      <p className="pointer-events-none absolute right-0 bottom-[75px] left-0 pl-3 text-center text-[38px] leading-[50px] whitespace-nowrap text-white [-webkit-text-stroke:2px_#222] [paint-order:stroke_fill]">讲完了列表元素的添加操作</p>
    </div>
  );
}
